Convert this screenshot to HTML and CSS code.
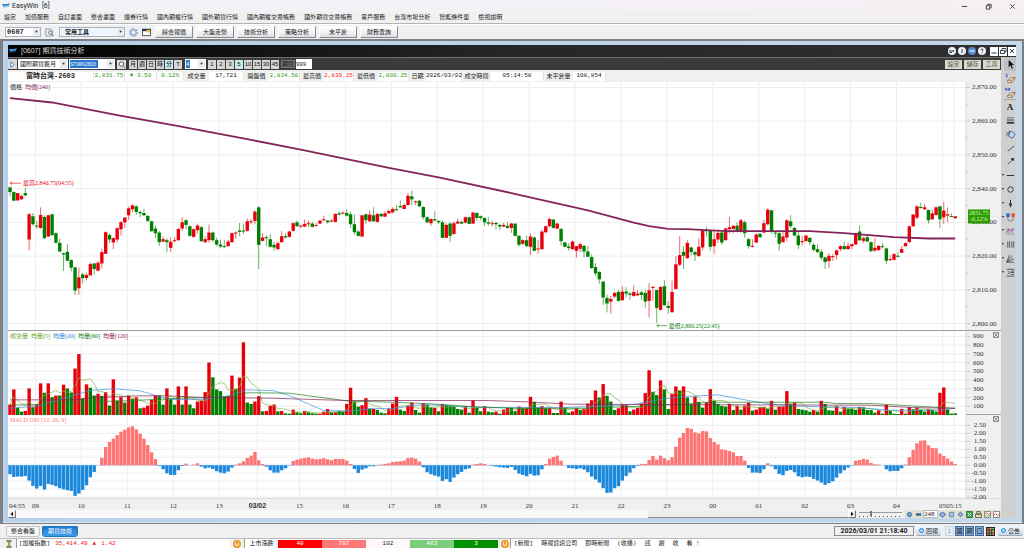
FILE: index.html
```html
<!DOCTYPE html>
<html lang="zh-Hant">
<head>
    <meta charset="UTF-8">
    <meta name="viewport" content="width=device-width, initial-scale=1.0">
    <title>EasyWin [6]</title>
    <link rel="stylesheet" href="styles.css">
</head>
<body>
    <header class="app-title">
        <svg class="logo" viewBox="0 0 8 6"><path d="M0 1l2 4 1-3 1 3 1-3 1 2 2-4-3 1-2 0z" fill="#2b8fd0"/></svg>
        <span class="app-name">EasyWin&nbsp; [6]</span>
        <button class="win-control" aria-label="Minimize"><svg viewBox="0 0 8 8"><path d="M1 4h6" /></svg></button>
        <button class="win-control" aria-label="Restore"><svg viewBox="0 0 8 8"><path d="M1.5 3h4v4h-4zM3 2.500V1.500h4v4h-1" /></svg></button>
        <button class="win-control" aria-label="Close"><svg viewBox="0 0 8 8"><path d="M1.500 1.500l5 5M6.500 1.500l-5 5" /></svg></button>
    </header>

    <nav class="menu">
        <button>設定</button>
        <button>加值服務</button>
        <button>自訂畫面</button>
        <button>整合畫面</button>
        <button>證券行情</button>
        <button>國內期權行情</button>
        <button>國外期貨行情</button>
        <button>國內期權交易帳務</button>
        <button>國外期貨交易帳務</button>
        <button>客戶服務</button>
        <button>台灣市場分析</button>
        <button>智能條件單</button>
        <button>檢視說明</button>
    </nav>

    <div class="toolbar">
        <span class="combo combo-code">
            <select aria-label="畫面代碼"><option>0607</option></select>
        </span>
        <button class="icon-button" aria-label="搜尋">
            <svg viewBox="0 0 10 10"><path d="M1 1h5l2 2v6H1z" fill="#f4f4f4" stroke="#8a9098"/><circle cx="6" cy="5" r="2" fill="#d8eaf0" stroke="#5a6a74"/><path d="M7.500 6.500L9.500 9" stroke="#5a6a74"/></svg>
        </button>
        <span class="combo combo-tools">
            <select aria-label="工具列"><option>常用工具</option></select>
        </span>
        <button class="icon-button" aria-label="設定">
            <svg viewBox="0 0 10 10"><circle cx="5" cy="5" r="4" fill="none" stroke="#8fb0d4" stroke-width="2" stroke-dasharray="2 1"/><circle cx="5" cy="5" r="2.800" fill="#eef5fb" stroke="#6c95c4"/></svg>
        </button>
        <button class="icon-button" aria-label="視窗">
            <svg viewBox="0 0 10 10"><path d="M0.500 1.500h9v7h-9z" fill="#fff" stroke="#445"/><path d="M0 1h10v2.500H0z" fill="#24345c"/><path d="M5 2h4v3H5z" fill="#f2c230"/></svg>
        </button>
        <div class="shortcuts">
            <button>綜合報價</button>
            <button>大盤走勢</button>
            <button>技術分析</button>
            <button>策略分析</button>
            <button>未平倉</button>
            <button>財務查詢</button>
        </div>
    </div>

    <main class="workspace">
        <section class="child-window">
            <header class="child-title">
                <svg class="logo" viewBox="0 0 8 6"><path d="M0 1l2 4 1-3 1 3 1-3 1 2 2-4-3 1-2 0z" fill="#3aa0e0"/></svg>
                <h1>[0607] 期貨技術分析</h1>
                <button class="round" aria-label="輸出"><svg viewBox="0 0 8 8"><path d="M2 2.500v3h2M3 4h3M5 3l1 1-1 1"/></svg></button>
                <button class="round" aria-label="資訊"><svg viewBox="0 0 8 8"><path d="M4 2v4"/></svg></button>
                <button class="round round-blue" aria-label="同步"><svg viewBox="0 0 8 8"><path d="M2 5l1.500-2L5 5l1-2"/></svg></button>
                <button class="round" aria-label="說明"><svg viewBox="0 0 8 8"><path d="M3 3q0-1 1-1t1 1-1 1.500M4 5.500v1"/></svg></button>
                <span class="child-controls">
                    <button aria-label="縮小"><svg viewBox="0 0 8 8"><path d="M1.500 6h5"/></svg></button>
                    <button aria-label="還原"><svg viewBox="0 0 8 8"><path d="M1.500 3.500h4v3h-4zM3 3V1.500h4v3.500H6"/></svg></button>
                    <button aria-label="關閉"><svg viewBox="0 0 8 8"><path d="M2 2l4 4M6 2l-4 4"/></svg></button>
                </span>
            </header>

            <div class="child-body">
                <div class="chart-column">
                    <div class="chart-toolbar">
                        <button class="expand" aria-label="展開"><svg viewBox="0 0 8 8"><path d="M2 1l4 3-4 3z" fill="#fff" stroke="#3878a8"/></svg></button>
                        <span class="combo combo-market">
                            <select aria-label="市場"><option>國際期貨獲月</option></select>
                        </span>
                        <span class="combo combo-symbol">
                            <input type="text" value="STWN2603" aria-label="商品代碼">
                        </span>
                        <button class="icon-button" aria-label="查詢">
                            <svg viewBox="0 0 10 10"><path d="M0 0h10v10H0z" fill="#ddd"/><circle cx="5" cy="4.500" r="2.500" fill="#eef" stroke="#456"/><path d="M7 6.500L9 9" stroke="#456"/></svg>
                        </button>
                        <div class="periods">
                            <button>月</button><button>週</button><button>日</button><button>時</button><button class="active">分</button><button>T</button>
                        </div>
                        <span class="combo combo-count">
                            <input type="text" value="4" aria-label="週期">
                        </span>
                        <div class="periods minutes">
                            <button>1</button><button>2</button><button>3</button><button class="active">5</button><button>10</button><button>15</button><button>30</button><button>45</button>
                        </div>
                        <label class="range-label" for="range">期間</label>
                        <input class="range-input" id="range" type="text" value="999">
                        <div class="chart-actions">
                            <button>設定</button>
                            <button>儲存</button>
                            <button>工具</button>
                        </div>
                    </div>

                    <div class="quote">
                        <span class="value name">富時台灣-2603</span>
                        <span class="value down">2,831.75</span>
                        <span class="value down">▼ 3.50</span>
                        <span class="value down">0.12%</span>
                        <span class="caption">成交量</span>
                        <span class="value">17,721</span>
                        <span class="caption">開盤價</span>
                        <span class="value down">2,834.50</span>
                        <span class="caption">最高價</span>
                        <span class="value up">2,839.25</span>
                        <span class="caption">最低價</span>
                        <span class="value down">2,800.25</span>
                        <span class="caption">日期</span>
                        <span class="value">2026/03/02</span>
                        <span class="caption">成交時間</span>
                        <span class="value">05:14:58</span>
                        <span class="caption">未平倉量</span>
                        <span class="value">108,854</span>
                    </div>

                    <div class="panels">
                        <div class="panel">
                            <svg class="plot" id="price"></svg>
                            <p class="legend"><span>價格</span><span class="ma240">均價[240]</span></p>
                        </div>
                        <div class="panel">
                            <svg class="plot" id="volume"></svg>
                            <p class="legend"><span class="ma5">成交量</span><span class="ma5">均量[5]</span><span class="ma20">均量[20]</span><span class="ma60">均量[60]</span><span class="ma120">均量[120]</span></p>
                            <button class="panel-close" aria-label="關閉成交量"><svg viewBox="0 0 6 6"><path d="M.5.5h5v5h-5zM1 1l4 4M5 1L1 5"/></svg></button>
                        </div>
                        <div class="panel">
                            <svg class="plot" id="macd"></svg>
                            <p class="legend"><span class="osc">MACD OSC[12, 26, 9]</span></p>
                            <button class="panel-close" aria-label="關閉MACD"><svg viewBox="0 0 6 6"><path d="M.5.5h5v5h-5zM1 1l4 4M5 1L1 5"/></svg></button>
                        </div>
                    </div>
                    <svg class="time-axis" id="time"></svg>

                    <div class="scroll-row">
                        <button class="arrow" aria-label="向左"><svg viewBox="0 0 8 8"><path d="M5 2v4L2.500 4z"/></svg></button>
                        <div class="track"><div class="thumb"></div></div>
                        <button class="arrow" aria-label="向右"><svg viewBox="0 0 8 8"><path d="M3 2v4l2.500-2z"/></svg></button>
                        <input class="zoom" type="range" min="0" max="100" value="28" aria-label="縮放">
                        <button class="mini" aria-label="放大"><svg viewBox="0 0 8 8"><path d="M4 1v6M1 4h6" stroke="#3f6f9f" stroke-width="3"/><path d="M4 2v4M2 4h4" stroke="#8fb8dc"/></svg></button>
                        <button class="mini" aria-label="縮小"><svg viewBox="0 0 8 8"><path d="M1 4h6" stroke="#3f6f9f" stroke-width="3"/></svg></button>
                        <input class="bar-count" type="text" value="248" aria-label="筆數">
                        <button class="mini" aria-label="左移"><svg viewBox="0 0 8 8"><path d="M1 3l3-1.500L7 3v2L4 7 1 5z" fill="#8cb4dc" stroke="#3f6f9f"/></svg></button>
                        <button class="mini" aria-label="重設"><svg viewBox="0 0 8 8"><path d="M1.500 1.500h5v5h-5z" fill="#a4c4e4" stroke="#5a82b0"/></svg></button>
                        <button class="mini" aria-label="右移"><svg viewBox="0 0 8 8"><path d="M1 4l3-2.500L7 4 4 6.500z" fill="#8cb4dc" stroke="#3f6f9f"/></svg></button>
                        <button class="mini" aria-label="匯出"><svg viewBox="0 0 8 8"><path d="M.5.5h7v7h-7z" fill="#39a04a" stroke="#1f6e2f"/><path d="M2 2l4 4M6 2L2 6" stroke="#fff"/></svg></button>
                        <button class="mini" aria-label="列印"><svg viewBox="0 0 8 8"><path d="M2 .5h4v3H2zM.5 3.500h7v4h-7z" fill="#e4dca0" stroke="#555"/></svg></button>
                        <button class="mini" aria-label="線圖"><svg viewBox="0 0 8 8"><path d="M.5.5h7v7h-7z" fill="#fff" stroke="#777"/><path d="M1 3l2-1 2 2 2-1" stroke="#d33" fill="none"/><path d="M1 6l2-1 2 1 2-2" stroke="#393" fill="none"/></svg></button>
                        <button class="mini" aria-label="指標"><svg viewBox="0 0 8 8"><path d="M.5.5h7v7h-7z" fill="#fff" stroke="#777"/><path d="M1 5l2-2 2 2 2-1" stroke="#d33" fill="none"/></svg></button>
                    </div>
                </div>

                <aside class="draw-tools">
                    <div class="tool-group erase-group">
                        <button class="selected" aria-label="游標"><svg viewBox="0 0 12 12"><path d="M4 1v8l2-2 1.500 3.500 1.200-.5L7.200 6.500H10z" fill="#111"/></svg></button>
                        <button aria-label="清除一個"><svg viewBox="0 0 12 12"><path d="M1 1.500L2 1v3M1 4h2" stroke="#3355bb" fill="none"/><path d="M3 8l4-3h4l-1 3-3 2.500H3z" fill="#f6e4c4" stroke="#6a5a4a" stroke-width=".7"/><path d="M3 8h4v2.500M7 8l4-3" stroke="#6a5a4a" stroke-width=".7" fill="none"/></svg></button>
                        <button aria-label="清除全部"><svg viewBox="0 0 12 12"><path d="M0 4l1-3 1 3M3.500 1v3M5 1v3" stroke="#3355bb" fill="none"/><path d="M3 9l4-3h4l-1 3-3 2.500H3z" fill="#f6e4c4" stroke="#6a5a4a" stroke-width=".7"/><path d="M3 9h4v2.500M7 9l4-3" stroke="#6a5a4a" stroke-width=".7" fill="none"/></svg></button>
                    </div>
                    <div class="tool-group draw-group">
                        <button class="letter" aria-label="文字">A</button>
                        <button aria-label="線寬"><svg viewBox="0 0 12 12"><path d="M2 3h8" stroke="#333" stroke-width=".7"/><path d="M2 5.500h8" stroke="#333"/><path d="M2 8.500h8" stroke="#333" stroke-width="2"/></svg></button>
                        <button aria-label="填色"><svg viewBox="0 0 12 12"><path d="M4 5l3-3 4 4-3 4-4-2z" fill="#c4d8ec" stroke="#445c8c"/><path d="M2 8q0-5 3-5M5 2v4" stroke="#445c8c" fill="none"/></svg></button>
                        <button aria-label="直線"><svg viewBox="0 0 12 12"><path d="M3 9l7-6" stroke="#222" stroke-width=".8"/></svg></button>
                        <button aria-label="箭線"><svg viewBox="0 0 12 12"><path d="M3 9l4-4" stroke="#222" stroke-width=".8"/><path d="M10 2L9 6 6 3z" fill="#222"/></svg></button>
                        <button class="more" aria-label="水平線"><svg viewBox="0 0 12 12"><path d="M2 6h8" stroke="#222"/></svg></button>
                        <button class="more" aria-label="圓形"><svg viewBox="0 0 12 12"><circle cx="6" cy="6" r="3" fill="none" stroke="#333"/></svg></button>
                        <button class="more" aria-label="標記"><svg viewBox="0 0 12 12"><path d="M6 2v8" stroke="#222"/><path d="M4 6h4L6 10z" fill="#222"/></svg></button>
                        <button class="more" aria-label="磁鐵"><svg viewBox="0 0 12 12"><path d="M3 5v2q0 3 3 3t3-3V5" stroke="#777" fill="none"/><path d="M1.500 1.500h3.500v4H1.500z" fill="#2367d0"/><path d="M7 1.500h3.500v4H7z" fill="#e85020"/></svg></button>
                        <button class="more" aria-label="黃金分割"><svg viewBox="0 0 12 12"><path d="M2 3v7h8M2 5h8M4 3v6M8 3v6" stroke="#888" stroke-width=".7" fill="none"/><path d="M2 8l3-3 2 2 3-3" stroke="#c030c0" fill="none"/></svg></button>
                        <button class="more" aria-label="週期線"><svg viewBox="0 0 12 12"><path d="M3 2.500v7M5 2.500v7M7.500 2.500v7M9.500 2.500v7" stroke="#333" stroke-width=".8"/></svg></button>
                        <button class="more" aria-label="扇形線"><svg viewBox="0 0 12 12"><path d="M2 10l3-8M2 10l6-7M2 10l8-4M2 10h8" stroke="#333" stroke-width=".8"/></svg></button>
                        <button class="more" aria-label="回歸"><svg viewBox="0 0 12 12"><path d="M2 2.500h8M2 10h8M3 4.500l2 1.500-2 2M6 4.500h4M6 6h4M6 8h4" stroke="#333" stroke-width=".8" fill="none"/></svg></button>
                    </div>
                </aside>
            </div>
        </section>
    </main>

    <div class="tabs">
        <button class="tab">整合看盤</button>
        <button class="tab current">期貨技術</button>
        <span class="clock">2026/03/01 21:18:40</span>
        <button class="status-button"><span class="bulb"></span>回報</button>
        <div class="pages">
            <button class="off">1</button><button>國</button><button>期</button><button>口</button>
        </div>
        <svg class="palette" viewBox="0 0 10 10"><path d="M0 0h10v10H0z" fill="#222"/><path d="M1 1h2v2H1zM1 7h2v2H1z" fill="#e55"/><path d="M4 1h2v2H4zM7 4h2v2H7z" fill="#ec5"/><path d="M7 1h2v2H7zM4 7h2v2H4z" fill="#5c5"/><path d="M1 4h2v2H1zM4 4h2v2H4zM7 7h2v2H7z" fill="#e87"/></svg>
        <button class="status-button"><span class="bulb"></span>公告</button>
    </div>

    <footer class="ticker">
        <svg class="ticker-icon" viewBox="0 0 8 9"><path d="M1 1h6M1 8h6" stroke="#443"/><path d="M2 1.500h4L4 4.500 6 7.500H2l2-3z" fill="#d8a030" stroke="#443" stroke-width=".5"/></svg>
        <div class="ticker-box index-box"><span>[加權指數]</span><span class="up">35,414.49</span><span class="up">▲</span><span class="up">1.42</span></div>
        <svg class="ticker-icon" viewBox="0 0 8 8"><circle cx="4" cy="4" r="3.200" fill="#ffe0a0" stroke="#f09018" stroke-width="1.500"/><path d="M4 2v2.500" stroke="#a05000"/></svg>
        <div class="ticker-box breadth"><span class="breadth-name">上市漲跌</span><span class="limit-up">40</span><span class="rise">707</span><span class="flat">102</span><span class="fall">463</span><span class="limit-down">3</span></div>
        <svg class="ticker-icon" viewBox="0 0 8 8"><circle cx="4" cy="4" r="3.200" fill="#ffe0a0" stroke="#f09018" stroke-width="1.500"/><path d="M4 2v2.500" stroke="#a05000"/></svg>
        <div class="ticker-box news"><span>[新聞]</span><span>時報資訊公司</span><span>即時新聞</span><span>(收播)</span><span>感</span><span>謝</span><span>收</span><span>看 !</span></div>
    </footer>

    <script src="chart.js"></script>
</body>
</html>
```

FILE: styles.css
```css
* {
    box-sizing: border-box;
}
body {
    margin: 0;
    min-height: 100vh;
    display: flex;
    flex-direction: column;
    font-family: "Liberation Sans", "Noto Sans CJK TC", sans-serif;
    font-size: 6px;
    line-height: 8px;
    color: #222;
    background-color: #f0f0f0;
}
button, input, select {
    font: inherit;
    color: inherit;
    margin: 0;
    padding: 0;
    border: none;
    border-radius: 0;
    background: none;
    outline: none;
}
button {
    display: flex;
    align-items: center;
    justify-content: center;
    white-space: nowrap;
}
svg {
    display: block;
}

/* application title and menu */
.app-title {
    display: flex;
    align-items: center;
    height: 12px;
    padding-left: 2px;
    background: linear-gradient(90deg, #f1f3f7, #f6eff4);
}
.logo {
    width: 8px;
    height: 6px;
}
.app-name {
    flex: 1;
    margin-left: 2px;
    font-family: Roboto, sans-serif;
    font-size: 7px;
}
.win-control {
    width: 24px;
    height: 12px;
}
.win-control svg {
    width: 7px;
    height: 7px;
    fill: none;
    stroke: #333;
}
.menu {
    display: flex;
    gap: 9px;
    height: 12px;
    padding: 0 4px 2px;
    border-bottom: 1px solid #b4b4b4;
}

/* main toolbar */
.toolbar {
    display: flex;
    align-items: center;
    gap: 3px;
    height: 15px;
    padding: 0 5px;
    border-top: 1px solid #fff;
}
.combo {
    position: relative;
    display: flex;
    height: 10px;
    border: 1px solid #a8b4c0;
    background-color: #fff;
}
.combo select, .combo input {
    width: 100%;
    padding-left: 1px;
    appearance: none;
}
.combo::after {
    content: "▼";
    position: absolute;
    top: 0;
    right: 0;
    width: 7px;
    height: 8px;
    font-size: 4px;
    text-align: center;
    background-color: #e8ecf0;
    pointer-events: none;
}
.combo-code {
    width: 36px;
    font-family: "Liberation Mono", monospace;
    font-size: 7px;
    font-weight: bold;
}
.combo-tools {
    width: 66px;
    margin-left: 2px;
    font-weight: bold;
    background-color: #eef5fc;
}
.combo-tools select {
    padding-left: 5px;
}
.icon-button {
    width: 10px;
    height: 10px;
}
.icon-button svg {
    width: 9px;
    height: 9px;
}
.shortcuts {
    display: flex;
    gap: 3px;
    margin-left: 1px;
}
.shortcuts button {
    width: 38px;
    height: 12px;
    border: 1px solid #fff;
    border-right-color: #888;
    border-bottom-color: #888;
    background: linear-gradient(#fff, #f0f0f0 60%, #dcdfe6);
}

/* mdi area */
.workspace {
    flex: 1;
    display: flex;
    min-height: 300px;
    padding: 2px 2px 1px 3px;
    background-color: #7c8084;
}
.child-window {
    flex: 1;
    display: flex;
    flex-direction: column;
    min-width: 0;
    padding: 4px 6px 4px 5px;
    background: linear-gradient(90deg, #b8d0e8, #c4d8ea);
    border-bottom: 1px solid #dde8f2;
}
.child-title {
    display: flex;
    align-items: center;
    gap: 2px;
    height: 12px;
    padding-left: 1px;
    color: #d8d8d8;
    background: linear-gradient(90deg, #000, #262626 50%, #303030);
}
.child-title h1 {
    flex: 1;
    margin: 0 0 0 2px;
    font-size: 7px;
    font-weight: normal;
}
.child-title svg {
    width: 8px;
    fill: none;
    stroke: #345;
}
.child-title .logo {
    stroke: none;
}
.round {
    width: 8px;
    height: 8px;
    border-radius: 50%;
    background-color: #eef2f8;
}
.round-blue {
    background-color: #5a8cd0;
}
.round-blue svg {
    stroke: #fff;
}
.child-controls {
    display: flex;
    gap: 1px;
    margin-left: 2px;
}
.child-controls button {
    width: 8px;
    height: 9px;
    background-color: #fff;
}
.child-body {
    flex: 1;
    display: flex;
    min-height: 0;
}
.chart-column {
    flex: 1;
    display: flex;
    flex-direction: column;
    min-width: 0;
    background-color: #f0f0f0;
}

/* chart toolbar */
.chart-toolbar {
    display: flex;
    align-items: center;
    gap: 1px;
    height: 13px;
    border-top: 1px solid #707070;
    background-color: #3b3b3b;
}
.chart-toolbar .combo {
    border-color: #fff;
}
.expand {
    width: 9px;
    height: 10px;
    background-color: #d8d8d8;
}
.expand svg {
    width: 7px;
    height: 7px;
}
.combo-market {
    width: 50px;
}
.combo-symbol {
    width: 46px;
}
.combo-symbol input {
    width: 28px;
    padding: 0;
    font-size: 5px;
    color: #fff;
    background-color: #2878d0;
}
.combo-count {
    width: 21px;
}
.combo-count input {
    width: 4px;
    padding: 0;
    color: #fff;
    background-color: #2878d0;
}
.periods {
    display: flex;
    gap: 1px;
    margin: 0 2px;
}
.periods button {
    width: 8px;
    height: 9px;
    color: #111;
    background-color: #d6d6d6;
}
.minutes {
    margin: 0 1px;
}
.periods .active {
    background-color: #c4ecee;
}
.range-label {
    padding: 0 1px;
    color: #111;
    background-color: #777;
}
.range-input {
    width: 16px;
    height: 10px;
    background-color: #fff;
}
.chart-actions {
    flex: 1;
    display: flex;
    justify-content: flex-end;
    gap: 2px;
    padding-right: 1px;
}
.chart-actions button {
    width: 17px;
    height: 9px;
    color: #5c5638;
    background-color: #d8d8d2;
}

/* quote line */
.quote {
    display: grid;
    grid-template-columns: 86px 31px 32px 27px 25px 35px 25px 31px 24px 30px 24px 31px 17px 36px 29px 53px 29px 33px;
    align-items: center;
    height: 12px;
    overflow: hidden;
    text-align: center;
    white-space: nowrap;
}
.value {
    height: 9px;
    border-right: 1px solid #e4e4e4;
    font-family: "Liberation Mono", "Noto Sans CJK TC", monospace;
    background-color: #fff;
}
.name {
    font-size: 7px;
    font-weight: bold;
}
.up {
    color: #f01820;
}
.down {
    color: #2f9a18;
}

/* chart panels */
.panels {
    flex: 1;
    display: grid;
    grid-template-rows: 250fr 85fr 84fr;
    min-height: 0;
}
.panel {
    position: relative;
    min-height: 0;
    border-bottom: 1px solid #a0a0a0;
}
.panel:last-child {
    border-bottom-color: #dcdcdc;
}
.plot, .time-axis {
    position: relative;
    width: 100%;
    height: 100%;
    overflow: visible;
    font-family: "Liberation Serif", "Noto Sans CJK TC", serif;
    font-size: 7px;
    fill: #333;
}
.plot {
    position: absolute;
}
.time-axis {
    flex: none;
    height: 11px;
}
.date-mark {
    font-family: "Liberation Sans", sans-serif;
    font-weight: bold;
}
.note {
    font-size: 6px;
}
.tag-text {
    font-size: 6px;
    fill: #d8ffc8;
}
.legend {
    position: relative;
    display: flex;
    gap: 3px;
    margin: 0;
    padding: 1px 2px;
    font-family: "Liberation Serif", "Noto Sans CJK TC", serif;
}
.ma240, .ma120 {
    color: #8a2458;
}
.ma5 {
    color: #6aa81c;
}
.ma20 {
    color: #2a8cdc;
}
.ma60 {
    color: #108010;
}
.osc {
    color: #ff7878;
}
.panel-close {
    position: absolute;
    top: 1px;
    right: 2px;
    width: 6px;
    height: 6px;
}
.panel-close svg {
    width: 6px;
    fill: none;
    stroke: #666;
    stroke-width: 0.7;
}

/* scroll row under the chart */
.scroll-row {
    display: flex;
    align-items: center;
    height: 8px;
}
.arrow {
    width: 8px;
    height: 8px;
    border: 1px solid #fff;
    border-right-color: #777;
    border-bottom-color: #777;
    background-color: #f0f0f0;
}
.arrow svg {
    width: 8px;
    height: 8px;
    flex: none;
}
.track {
    flex: 1;
    height: 8px;
    background-color: #f8f8f8;
}
.thumb {
    width: 24%;
    height: 8px;
    margin-left: auto;
    border-bottom: 1px solid #888;
    background-color: #eee;
}
.zoom {
    width: 43px;
    height: 8px;
    margin: 0 3px;
    appearance: none;
    background: linear-gradient(#999, #999) 0 2px / 100% 1px no-repeat, repeating-linear-gradient(90deg, #555 0 1px, transparent 1px 4px) 0 6px / 100% 1px no-repeat;
}
.zoom::-webkit-slider-thumb {
    appearance: none;
    width: 2px;
    height: 5px;
    margin-top: -2px;
    background-color: #777;
}
.mini {
    width: 9px;
    height: 8px;
    background-color: #e4e0d4;
}
.mini svg {
    width: 7px;
    height: 7px;
    fill: none;
}
.bar-count {
    width: 15px;
    height: 8px;
    border: 1px solid #bbb;
    font-family: "Liberation Serif", serif;
    font-size: 7px;
    background-color: #fff;
}

/* drawing tools */
.draw-tools {
    width: 15px;
    padding-left: 3px;
    background-color: #d0d0d0;
}
.tool-group {
    display: flex;
    flex-direction: column;
}
.tool-group button {
    position: relative;
    flex: 1;
}
.tool-group svg {
    width: 11px;
    height: 11px;
    flex: none;
}
.erase-group {
    height: 43px;
    border-bottom: 1px solid #aaa;
}
.draw-group {
    height: 179px;
}
.selected {
    background-color: #c0c0c0;
}
.letter {
    font-family: "Liberation Serif", serif;
    font-size: 9px;
    font-weight: bold;
}
.more::before {
    content: "";
    position: absolute;
    left: -2px;
    border: 1px solid transparent;
    border-top: 2px solid #222;
}

/* tabs and status */
.tabs {
    display: flex;
    align-items: center;
    gap: 2px;
    height: 14px;
    padding: 0 1px 0 6px;
}
.tab {
    width: 34px;
    height: 11px;
    border: 1px solid #c4c4c4;
    border-radius: 0 0 3px 3px;
    background-color: #f6f6f6;
}
.current {
    width: 36px;
    border-color: #1c78c8;
    color: #fff;
    background: linear-gradient(#1c78d0, #3c9ce8);
}
.clock {
    width: 80px;
    margin-left: auto;
    border: 1px solid #8c8c8c;
    font-family: Roboto, sans-serif;
    font-size: 7px;
    font-weight: bold;
    text-align: center;
}
.status-button {
    gap: 2px;
    width: 25px;
    height: 10px;
    border-bottom: 1px solid #9ab;
    border-radius: 2px;
    background: linear-gradient(#f4f8fc, #ccdaea);
}
.bulb {
    width: 5px;
    height: 5px;
    border: 1px solid #2878d0;
    border-radius: 50%;
    background-color: #a8e0ff;
}
.pages {
    display: flex;
    gap: 1px;
    margin-left: 2px;
}
.pages button {
    width: 9px;
    height: 10px;
    border: 1px solid #486c9c;
    background-color: #7ca8dc;
}
.pages .off {
    border-color: #c8d4e0;
    color: #7c94b0;
    background-color: #e4ecf4;
}
.palette {
    width: 9px;
    height: 9px;
    margin-right: 1px;
}

/* bottom ticker */
.ticker {
    display: flex;
    align-items: center;
    gap: 3px;
    height: 10px;
    padding-left: 5px;
    border-top: 1px solid #bbb;
    font-family: "Liberation Mono", "Noto Sans CJK TC", monospace;
}
.ticker-icon {
    width: 8px;
    height: 8px;
}
.ticker-box {
    display: flex;
    align-items: center;
    height: 9px;
    border-left: 1px solid #999;
    background-color: #fff;
    white-space: nowrap;
}
.index-box {
    gap: 5px;
    width: 214px;
    padding-left: 2px;
}
.breadth {
    width: 254px;
    text-align: center;
}
.breadth span {
    flex: 1;
}
.breadth .breadth-name {
    flex: none;
    width: 33px;
}
.limit-up {
    color: #fff;
    background-color: #fa0000;
}
.rise {
    color: #fff;
    background-color: #ff7878;
}
.flat {
    background-color: #fff8f8;
}
.fall {
    color: #fff;
    background-color: #7ccc7c;
}
.limit-down {
    color: #fff;
    background-color: #009000;
}
.news {
    flex: 1;
    gap: 8px;
    margin-left: -2px;
    padding-left: 3px;
    overflow: hidden;
}
```

FILE: chart.js
```javascript
// one entry per bar: colour, high, body top, body bottom, low (ticks below PRICE_BASE)
const PRICE_BASE = 2871.92;
const TICKS = 10.17;
const candles = `
g318,321,335,348 g333,335,361,362 r338,338,360,362 r343,347,357,358 g322,338,345,347 r398,402,478,511 g398,408,432,437 g422,436,439,446
r381,404,443,447 g406,410,474,476 r403,405,469,470 g400,402,465,466 g456,459,488,489 g475,488,514,517 g519,519,523,573 g492,515,542,543
g538,540,563,574 g560,562,632,645 r562,592,625,645 g578,583,594,611 r578,585,594,601 r547,552,586,587 g549,550,567,584 r543,548,572,573
r506,516,550,565 r453,456,521,522 g460,464,478,489 r471,474,487,507 r442,444,478,487 r422,426,447,466 r410,412,426,443 r379,384,405,419
r372,375,387,396 g375,378,395,404 g391,395,399,411 g385,398,405,408 g404,407,422,426 g422,423,453,454 g436,445,459,474 g452,457,486,498
r468,477,484,486 g474,480,486,516 r471,485,503,516 r471,480,482,487 r444,446,480,482 r410,426,445,452 g416,420,434,447 g435,438,467,470
r444,447,470,473 r430,436,450,460 g437,441,483,486 r468,477,486,489 r433,457,480,488 g454,457,480,486 g472,480,493,498 g478,493,499,504
g479,498,500,503 r480,484,498,500 r457,459,486,488 r454,457,459,476 g428,451,455,468 g430,451,454,461 r415,423,452,454 r417,423,425,431
r390,394,422,432 g378,381,494,567 r459,472,482,484 g466,471,473,498 g462,477,500,502 g485,494,502,512 r483,489,507,510 r453,468,486,487
g459,468,472,474 r452,454,470,472 r427,429,452,454 g420,426,438,440 r434,436,439,444 r417,431,439,441 r420,429,432,441 g426,430,440,442
r429,434,437,439 r420,421,430,432 r407,417,420,422 g419,421,426,430 r416,421,423,424 r399,401,425,426 g393,399,403,406 r394,397,400,403
g387,398,406,409 g394,402,432,443 g402,432,456,464 g449,454,467,469 r404,405,469,471 g399,402,420,430 r390,403,423,426 g381,405,423,425
r399,401,425,427 g399,401,408,411 r393,399,409,411 r386,392,399,401 r381,386,396,399 g375,387,389,391 g360,377,381,382 r370,374,386,387
r338,346,374,376 g331,348,357,375 r360,363,366,374 g359,361,378,380 g378,380,411,418 g407,411,426,429 r415,416,429,437 g393,417,421,422
g420,422,426,431 g421,426,473,474 r429,434,473,474 g426,430,467,486 r424,429,461,464 r415,424,430,432 g421,425,430,432 r408,411,427,430
g409,411,431,432 r395,397,430,431 g397,398,413,422 g405,408,413,420 g411,413,426,437 g411,426,430,437 r421,429,432,439 g425,428,432,448
g431,434,439,450 r427,434,439,440 g425,437,443,445 r428,430,443,458 g430,430,467,469 g464,467,494,500 r477,480,491,494 g466,480,498,501
r459,469,500,525 g468,472,512,513 r480,505,508,521 r448,454,507,509 r436,438,456,459 r412,416,438,441 g416,418,443,445 r428,430,445,447
g444,446,483,496 g484,487,500,502 g489,499,504,511 r481,484,507,509 r497,498,512,533 r487,492,506,516 g494,497,514,532 g498,514,530,531
g524,531,564,567 g549,561,580,587 g573,576,598,611 g603,605,653,675 g644,654,671,698 r648,657,665,702 r635,639,650,656 g630,636,663,665
r618,635,661,662 g622,635,641,653 g636,641,645,660 r616,636,648,651 r630,641,646,648 g633,637,645,660 g629,639,665,683 r609,631,663,713
r617,621,623,663 g630,630,684,730 r619,621,690,693 g601,619,676,678 g663,678,684,702 r602,636,697,699 r528,553,627,629 r468,525,554,558
g498,515,527,567 r480,488,534,537 g499,502,516,526 g511,516,524,543 r474,500,528,530 r449,451,502,511 g441,450,452,469 g450,452,500,511
r448,477,498,521 r448,458,478,488 g454,457,487,494 r443,445,480,482 r410,441,447,459 r434,437,446,459 g426,436,455,457 r416,420,455,457
g420,426,459,473 g473,477,498,506 r477,497,500,502 r459,463,487,489 g458,461,471,473 r418,429,457,459 r384,388,432,435 g388,390,453,460
g453,457,459,473 g452,459,491,512 r454,469,486,487 r417,420,472,483 g405,423,438,443 g441,443,466,468 g453,466,495,507 r468,483,486,496
r465,466,483,484 g471,473,486,495 g489,494,509,514 g492,507,516,518 g507,515,533,540 g529,532,546,567 r519,527,543,564 r522,528,531,543
r507,511,525,538 r495,498,507,514 g484,498,507,509 r486,497,507,509 r490,492,498,508 r457,459,493,495 g436,454,480,483 r469,474,482,489
g465,471,484,486 g484,486,513,516 r474,503,511,516 r495,497,510,512 g489,498,500,505 g502,505,542,552 r525,537,540,543 r519,522,539,541
g516,527,529,532 r498,507,518,520 r486,489,498,500 r437,438,486,487 r401,403,438,440 r375,378,412,418 g367,380,383,385 r370,381,387,389
g388,389,420,430 r388,399,417,418 r378,381,404,406 g376,378,417,444 r364,391,411,432 r381,402,406,426 g399,407,409,411 r407,408,414,415
`.trim().split(/\s+/).map(s => [s[0], ...s.slice(1).split(',').map(v => PRICE_BASE - v / TICKS)]);

const LOT = 3.85;
const volumes = `
r31 r76 g22 g10 r12 r79 g23 r32 r94 g66 r94 g53 r58 g58 r90 g79 g67 r138 r181 g49 r91 g81 g58 r63 g57 r68 g28 r106 g43 r53
g37 r57 g48 r53 g20 r22 r28 r45 r59 g58 g31 r79 g48 g31 r85 g31 r85 g31 g20 r40 r43 r68 r156 g112 g76 g71 g55 r56 r117 g78
r111 r216 g37 g33 r40 r56 g11 r12 r27 r31 g11 r12 g5 g4 r16 g8 g5 r12 g8 g5 g4 r4 r10 r18 g8 r8 g12 g10 r33 r81
g40 g25 r29 r50 g19 r18 g15 g7 g5 r19 r34 r54 g16 g12 r28 r37 g15 g7 r35 g31 g23 r21 g11 r33 g30 g28 g25 g18 g16 r26
g7 r43 g22 g11 r26 g10 g8 r10 g4 r16 r22 g21 g11 r25 g21 r21 r54 g39 g22 r26 g20 r20 g6 g6 r40 g22 g7 r11 r21 g15
r19 r34 r44 r73 g52 r92 g57 g40 g15 r20 r31 r31 g11 r16 r21 r34 r65 r133 g69 g59 r103 g76 g18 r62 r85 g73 r85 g52 g31 r55
g39 g22 r38 r77 g43 g33 g27 g25 r33 g15 r28 g16 r28 r37 g13 r16 r23 r24 g19 r42 g16 r25 r25 r71 g32 r36 g18 g16 g14 g10
r15 g10 r42 g33 g14 g13 r27 g10 r24 g19 g19 g15 r24 g23 g15 g15 g7 r14 g4 r30 g12 g4 g3 r18 g4 r23 g17 r22 g16 g10
r18 g15 g10 r66 r82 g16 g4 g5
`.trim().split(/\s+/).map(s => [s[0], s.slice(1) * LOT]);

// MACD oscillator, 48 units = 1.00
const osc = [
    -27,-35,-34,-34,-32,-46,-62,-70,-62,-73,-56,-59,-63,-69,-72,-75,-77,-92,-85,-74,-60,-36,-20,0,22,55,70,80,91,101,
    107,114,117,108,95,80,61,39,19,-2,-12,-24,-29,-29,-15,-2,5,0,2,6,-4,-9,-7,-11,-18,-22,-24,-19,-7,2,
    6,12,22,29,40,15,4,-4,-15,-22,-22,-15,-9,-1,13,17,20,22,24,20,18,19,21,18,15,19,19,19,14,4,
    -11,-23,-13,-9,-3,-3,1,2,4,6,10,11,12,14,22,23,20,11,-6,-21,-27,-31,-34,-47,-42,-50,-37,-27,-20,-12,
    -9,2,4,6,4,1,-2,-4,-6,-7,-8,-5,-14,-25,-29,-33,-26,-31,-30,-12,4,20,25,29,14,0,-8,-9,-11,-9,
    -13,-21,-34,-43,-52,-69,-83,-82,-69,-63,-46,-32,-22,-9,-2,4,4,16,28,17,29,21,15,24,56,83,97,112,110,99,
    96,103,102,82,70,63,48,46,43,39,28,28,14,-8,-22,-22,-23,-12,6,-3,-12,-26,-30,-17,-14,-21,-33,-36,-34,-35,
    -41,-46,-52,-59,-54,-48,-37,-24,-15,-7,-1,14,16,19,17,7,3,2,0,-12,-18,-17,-17,-9,2,24,46,66,74,75,
    60,52,51,35,28,20,11,4
].map(v => v / 48);

// averages as [bar, value] knots
const ma240 = [[0,52],[11,65],[28,103],[43,134],[63,178],[76,207],[88,236],[99,262],[112,291],[131,338],[151,390],[163,427],[167,438],[172,446],[177,447],[187,453],[209,453],[218,459],[231,471],[240,475],[247,475]];
const volMa120 = [[0,45],[17,45],[20,50],[33,57],[41,57],[51,52],[68,50],[88,43],[125,43],[135,39],[147,32],[176,31],[225,29],[236,22],[247,20]];
const volMa60 = [[0,30],[6,30],[17,38],[30,42],[45,50],[55,52],[62,66],[73,65],[80,54],[88,42],[100,38],[110,33],[122,24],[132,20],[150,20],[160,24],[176,32],[183,38],[213,38],[216,34],[225,34],[234,28],[247,20]];
const volMa20 = [[0,20],[8,28],[15,53],[21,73],[27,78],[34,72],[38,58],[42,46],[50,46],[57,56],[62,75],[69,72],[73,58],[78,33],[82,13],[89,12],[95,20],[100,18],[105,28],[110,30],[124,22],[145,22],[157,28],[162,30],[171,48],[176,55],[179,56],[185,60],[193,43],[199,32],[207,26],[222,22],[230,14],[243,14],[247,20]];

const hours = [[7,'09'],[19,'10'],[31,'11'],[43,'12'],[55,'13'],[65,'03/02'],[76,'15'],[88,'16'],[100,'17'],[112,'18'],[124,'19'],[136,'20'],[148,'21'],[160,'22'],[172,'23'],[184,'00'],[196,'01'],[208,'02'],[220,'03'],[232,'04'],[244,'05'],[247,'05:15']];

const AXIS = 35;
const RED = '#e8000c';
const GREEN = '#008000';
const fmt = n => n.toLocaleString('en-US', { minimumFractionDigits: 2 });

function rect(x, y, w, h, fill) {
    return `<rect x="${x}" y="${y}" width="${w}" height="${h}" fill="${fill}"/>`;
}
function line(x1, y1, x2, y2, stroke, width = 1) {
    return `<line x1="${x1}" y1="${y1}" x2="${x2}" y2="${y2}" stroke="${stroke}" stroke-width="${width}"/>`;
}
function text(x, y, value, extra = '') {
    return `<text x="${x}" y="${y}" ${extra}>${value}</text>`;
}
function curve(points, stroke, width) {
    return `<polyline points="${points.map(p => p.join(',')).join(' ')}" fill="none" stroke="${stroke}" stroke-width="${width}"/>`;
}

// common geometry and the white, gridded background of a panel
function setup(id, max, min, levels, label) {
    const svg = document.getElementById(id);
    const w = svg.clientWidth - AXIS;
    const h = svg.clientHeight;
    const step = (w - 12) / 247.2;
    const x = i => 2 + i * step;
    const y = v => (max - v) / (max - min) * h;
    let out = rect(0, 0, w, h, '#fff');
    hours.forEach(([i]) => out += line(x(i - 0.35), 0, x(i - 0.35), h, '#eeeeee'));
    levels.forEach(v => {
        out += line(0, y(v), w, y(v), '#eeeeee');
        out += line(w, y(v), w + 4, y(v), '#c8c8c8');
        out += label(w, y(v) + 2, v);
    });
    out += line(w, 0, w, h, '#d8d8d8');
    return { svg, w, h, step, x, y, out };
}

function drawPrice() {
    const levels = [2870, 2860, 2850, 2840, 2830, 2820, 2810, 2800];
    const c = setup('price', 2871.6, 2798.1, levels, (w, y, v) => text(w + 6, y, fmt(v)));
    let out = c.out;
    levels.slice(0, -1).forEach(v => out += line(c.w, c.y(v - 5), c.w + 2, c.y(v - 5), '#c8c8c8'));
    candles.forEach(([dir, high, top, bottom, low], i) => {
        const color = dir === 'r' ? RED : GREEN;
        out += line(c.x(i), c.y(high), c.x(i), c.y(low), color, 0.6);
        out += rect(c.x(i) - 1.7, c.y(top), 3.4, Math.max(1, c.y(bottom) - c.y(top)), color);
    });
    out += curve(ma240.map(([i, v]) => [c.x(i), c.y(PRICE_BASE - v / TICKS)]), '#842458', 1.8);

    const hy = c.y(2841.6);
    out += `<path d="M13 ${hy}H2M4 ${hy - 1.5}L2 ${hy}l2 1.5" fill="none" stroke="${RED}" stroke-width=".6"/>`;
    out += text(15, hy + 2, '最高2,840.75(04:55)', `class="note" fill="${RED}"`);
    const lx = c.x(169);
    const ly = c.y(2799.4);
    out += `<path d="M${lx + 10} ${ly}H${lx}M${lx + 2} ${ly - 1.5}L${lx} ${ly}l2 1.5" fill="none" stroke="${GREEN}" stroke-width=".6"/>`;
    out += text(lx + 12, ly + 2, '最低2,800.25(22:45)', `class="note" fill="${GREEN}"`);

    // last price tag
    const ty = c.y(2831.75) - 7;
    out += rect(c.w + 2, ty, 22, 14, '#2c9c00');
    out += text(c.w + 3, ty + 6, '2831.75', 'class="tag-text"');
    out += text(c.w + 4, ty + 12, '-0.12%', 'class="tag-text"');
    c.svg.innerHTML = out;
}

function drawVolume() {
    const c = setup('volume', 961, 0, [900, 800, 700, 600, 500, 400, 300, 200, 100], (w, y, v) => text(w + 7, y, v));
    let out = c.out;
    volumes.forEach(([dir, v], i) => {
        out += rect(c.x(i) - 1.7, c.y(v), 3.4, c.h - c.y(v), dir === 'r' ? RED : GREEN);
    });
    const scaled = list => list.map(([i, v]) => [c.x(i), c.y(v * LOT)]);
    const ma5 = volumes.map((_, i) => {
        const part = volumes.slice(Math.max(0, i - 4), i + 1);
        return [c.x(i), c.y(part.reduce((sum, p) => sum + p[1], 0) / part.length)];
    });
    out += curve(ma5, '#7cb840', 0.7);
    out += curve(scaled(volMa20), '#3c94dc', 0.7);
    out += curve(scaled(volMa60), '#208020', 0.7);
    out += curve(scaled(volMa120), '#842458', 0.7);
    c.svg.innerHTML = out;
}

function drawMacd() {
    const c = setup('macd', 3.15, -2.05, [2.5, 2, 1.5, 1, 0.5, 0, -0.5, -1, -1.5, -2],
        (w, y, v) => text(w + 20, y, v.toFixed(2), 'text-anchor="end"'));
    let out = c.out + line(0, c.y(0), c.x(247), c.y(0), '#8cc4ec', 0.6);
    osc.forEach((v, i) => {
        out += rect(c.x(i) - 1.7, c.y(Math.max(v, 0)), 3.4, Math.abs(c.y(v) - c.y(0)), v > 0 ? '#ff7474' : '#1c88dc');
    });
    c.svg.innerHTML = out;
}

function drawTime() {
    const svg = document.getElementById('time');
    const step = (svg.clientWidth - AXIS - 12) / 247.2;
    let out = text(1, 9, '04:55');
    hours.forEach(([i, name]) => {
        out += text(2 + (i - 0.35) * step, 9, name, `text-anchor="middle" ${name === '03/02' ? 'class="date-mark"' : ''}`);
    });
    svg.innerHTML = out;
}

function draw() {
    drawPrice();
    drawVolume();
    drawMacd();
    drawTime();
}

draw();
window.addEventListener('resize', draw);
```
